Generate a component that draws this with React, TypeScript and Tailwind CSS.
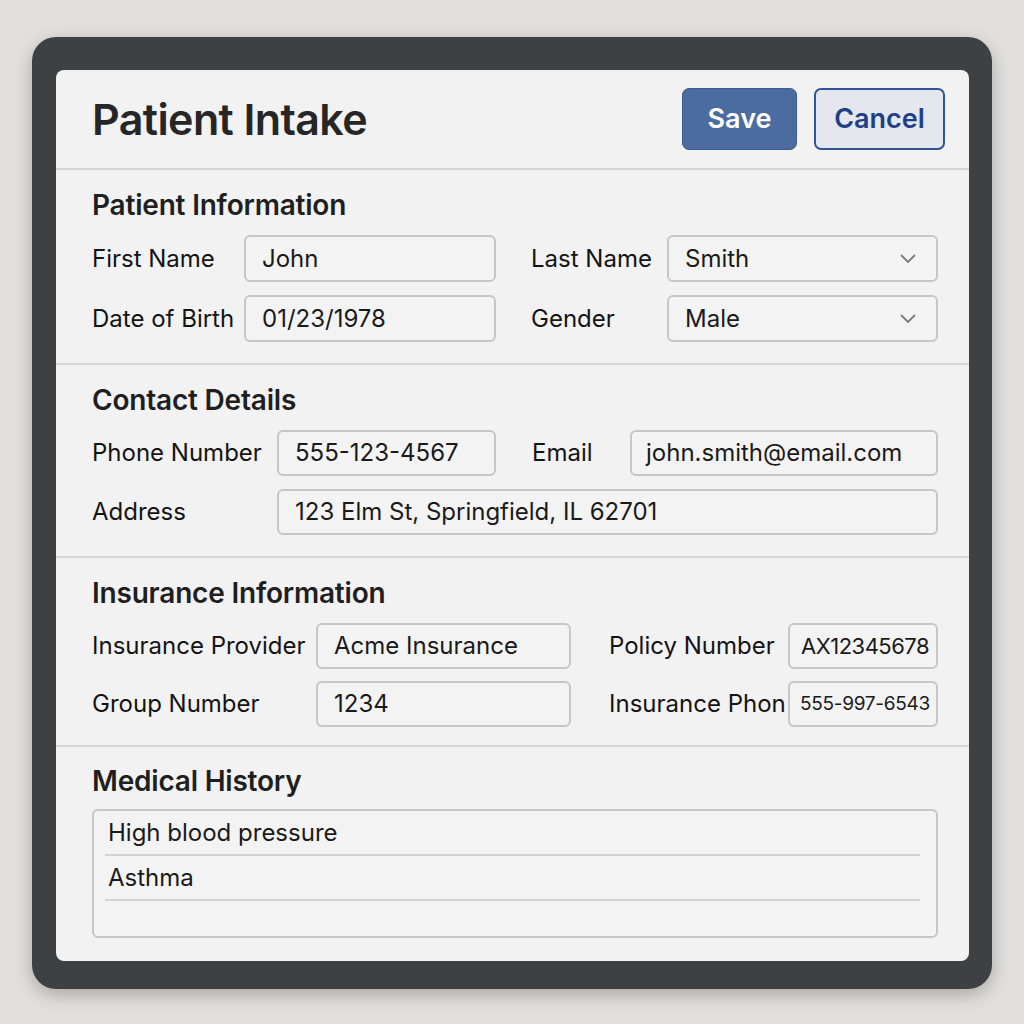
import type { ReactNode } from 'react';

const font = { fontFamily: 'Inter, "Noto Sans", sans-serif' };

function Field({
    value,
    select = false,
    className = 'pl-4 pr-5 text-[24px]',
}: {
    value: string;
    select?: boolean;
    className?: string;
}) {
    return (
        <div
            className={`flex min-w-0 items-center justify-between overflow-hidden rounded-[6px] border-2 border-[#c6c6c9] bg-[#f3f3f3] text-[#1a1a1a] ${className}`}
        >
            <span className="whitespace-nowrap">{value}</span>
            {select && (
                <svg width="16" height="10" viewBox="0 0 16 10" fill="none" className="shrink-0">
                    <path d="M1.5 1.5 8 8l6.5-6.5" stroke="#7a7a7a" strokeWidth="1.8" strokeLinecap="round" />
                </svg>
            )}
        </div>
    );
}

function Label({ children, className = '' }: { children: ReactNode; className?: string }) {
    return (
        <div className={`flex min-w-0 items-center overflow-hidden whitespace-nowrap text-[24px] text-[#141414] ${className}`}>
            {children}
        </div>
    );
}

function Section({ title, children, className = '' }: { title: string; children: ReactNode; className?: string }) {
    return (
        <section className={`pl-[36px] pr-[31px] ${className}`}>
            <h2 className="h-[34px] text-[28px] font-semibold leading-[34px] tracking-[-0.2px] text-[#1f1f1f]">
                {title}
            </h2>
            {children}
        </section>
    );
}

export default function App() {
    return (
        <div className="h-[1024px] w-[1024px] bg-[#e2e0dd] pl-[32px] pt-[37px]" style={font}>
            <div className="h-[952px] w-[960px] rounded-[24px] bg-[#3e4144] pb-[28px] pl-[24px] pr-[23px] pt-[33px] shadow-[0_6px_18px_rgba(0,0,0,0.25)]">
                <div className="flex h-full flex-col rounded-[8px] bg-[#f2f2f2]">
                    <header className="flex h-[100px] shrink-0 items-center justify-between border-b-2 border-[#d6d6d6] pl-[36px] pr-[24px]">
                        <h1 className="text-[43px] font-semibold tracking-[-0.6px] text-[#262626]">Patient Intake</h1>
                        <div className="flex gap-[17px]">
                            <button className="h-[62px] w-[115px] rounded-[7px] border border-[#3b5d92] bg-[#4a6ca1] text-[27px] font-semibold text-white">
                                Save
                            </button>
                            <button className="h-[62px] w-[131px] rounded-[7px] border-2 border-[#2f5596] bg-[#e4e7ed] text-[27px] font-semibold text-[#1f3f86]">
                                Cancel
                            </button>
                        </div>
                    </header>

                    <Section title="Patient Information" className="border-b-2 border-[#d6d6d6] pb-[21px] pt-[18px]">
                        <div className="mt-[13px] grid grid-cols-[152px_252px_171px_minmax(0,1fr)] auto-rows-[47px] gap-y-[13px]">
                            <Label>First Name</Label>
                            <Field value="John" />
                            <Label className="pl-[35px]">Last Name</Label>
                            <Field value="Smith" select />
                            <Label>Date of Birth</Label>
                            <Field value="01/23/1978" />
                            <Label className="pl-[35px]">Gender</Label>
                            <Field value="Male" select />
                        </div>
                    </Section>

                    <Section title="Contact Details" className="border-b-2 border-[#d6d6d6] pb-[21px] pt-[18px]">
                        <div className="mt-[13px] grid grid-cols-[185px_219px_134px_minmax(0,1fr)] auto-rows-[46px] gap-y-[13px]">
                            <Label>Phone Number</Label>
                            <Field value="555-123-4567" />
                            <Label className="pl-[36px]">Email</Label>
                            <Field value="john.smith@email.com" className="pl-[14px] pr-5 text-[24px]" />
                            <Label>Address</Label>
                            <Field value="123 Elm St, Springfield, IL 62701" className="col-span-3 pl-4 pr-5 text-[24px]" />
                        </div>
                    </Section>

                    <Section title="Insurance Information" className="border-b-2 border-[#d6d6d6] pb-[18px] pt-[18px]">
                        <div className="mt-[13px] grid grid-cols-[224px_255px_217px_minmax(0,1fr)] auto-rows-[46px] gap-y-[12px]">
                            <Label>Insurance Provider</Label>
                            <Field value="Acme Insurance" />
                            <Label className="pl-[38px]">Policy Number</Label>
                            <Field value="AX12345678" className="pl-[11px] pr-0 text-[22px] tracking-[-0.5px]" />
                            <Label>Group Number</Label>
                            <Field value="1234" />
                            <Label className="pl-[38px]">Insurance Phon</Label>
                            <Field value="555-997-6543" className="pl-[10px] pr-0 text-[19px] tracking-[-0.3px]" />
                        </div>
                    </Section>

                    <Section title="Medical History" className="pt-[17px]">
                        <div className="mt-[11px] h-[129px] rounded-[6px] border-2 border-[#c6c6c9] bg-[#f3f3f3] pl-[11px] pr-[16px]">
                            {['High blood pressure', 'Asthma'].map((item) => (
                                <div
                                    key={item}
                                    className="flex h-[45px] items-center border-b-2 border-[#d3d3d3] pl-[3px] text-[24px] text-[#1a1a1a]"
                                >
                                    {item}
                                </div>
                            ))}
                        </div>
                    </Section>
                </div>
            </div>
        </div>
    );
}
